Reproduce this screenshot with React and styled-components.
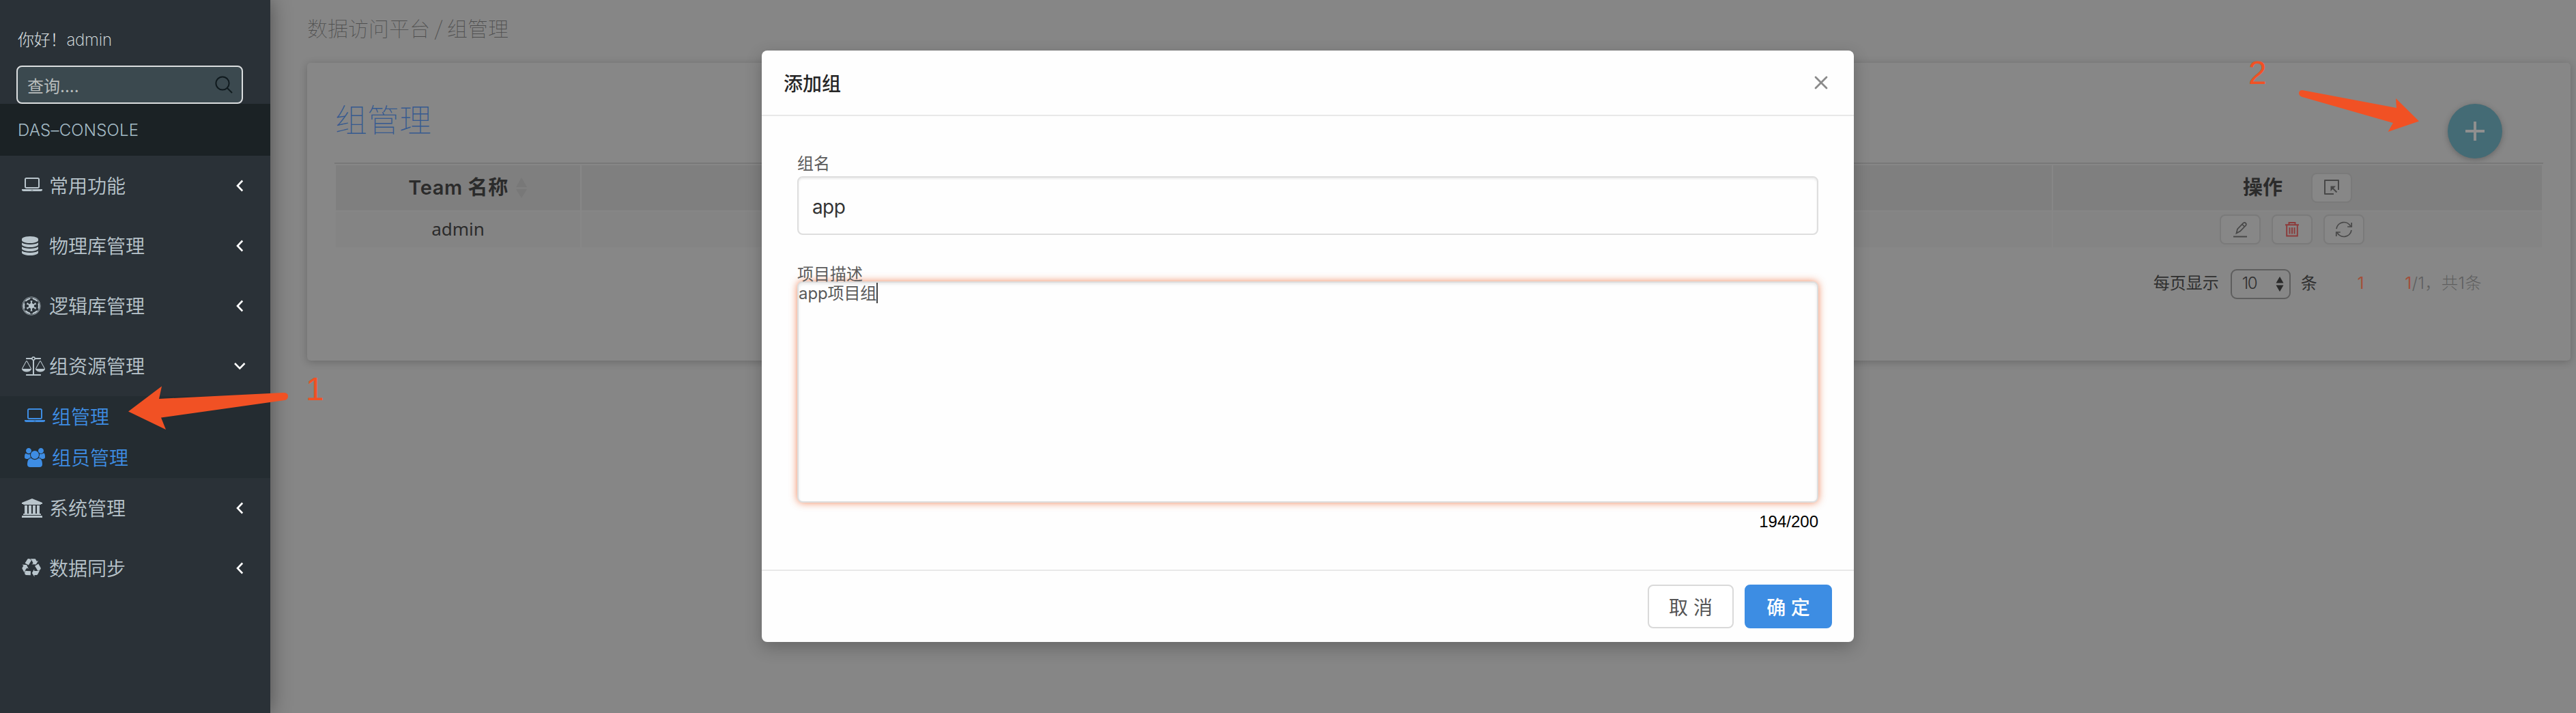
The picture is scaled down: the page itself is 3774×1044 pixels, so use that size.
import React from "react";
import styled, { createGlobalStyle } from "styled-components";
import { FaEmpire } from "react-icons/fa";

const FONT = `Inter, "Noto Sans CJK SC", sans-serif`;

const GlobalStyle = createGlobalStyle`
  *, *::before, *::after { box-sizing: border-box; }
  body { margin: 0; background: #868686; font-family: ${FONT}; overflow: hidden; }
  button, input, textarea { font-family: inherit; margin: 0; outline: none; }
`;

/* ---------- page frame ---------- */

const Page = styled.div`
  position: relative;
  display: flex;
  width: 3774px;
  height: 1044px;
  overflow: hidden;
  background: #868686;
`;

const Sidebar = styled.aside`
  position: relative;
  z-index: 1;
  flex: none;
  width: 396px;
  height: 100%;
  background: #2a3137;
  box-shadow: 0 0 28px rgba(0, 0, 0, 0.42);
`;

const Greeting = styled.div`
  height: 96px;
  padding: 44px 0 0 26px;
  color: #dfe3e5;
  font-size: 24px;
  font-weight: 250;
  line-height: 30px;
  letter-spacing: -0.2px;
`;

const SearchBox = styled.div`
  display: flex;
  align-items: center;
  justify-content: space-between;
  width: 332px;
  height: 56px;
  margin-left: 24px;
  padding: 0 13px 0 14px;
  border: 2px solid #dcdfe0;
  border-radius: 8px;
  background: #3b494f;
  color: #b9bdbd;
  font-size: 24px;
`;

const ConsoleBand = styled.div`
  display: flex;
  align-items: center;
  height: 76px;
  padding-left: 26px;
  background: #1b2225;
  color: #a5bcc7;
  font-size: 24px;
  font-weight: 300;
  letter-spacing: 0.2px;
`;

const MenuItem = styled.div`
  display: flex;
  align-items: center;
  height: 88px;
  padding: 0 40px 0 32px;
  color: #b9c5cc;
  font-size: 28px;
  font-weight: 350;
`;

const IconSlot = styled.span`
  display: flex;
  flex: none;
  width: 40px;
  svg { display: block; }
`;

const MenuLabel = styled.span`
  flex: 1;
  padding-top: 1px;
  line-height: 36px;
`;

const Submenu = styled.div`
  background: #242c31;
`;

const SubItem = styled(MenuItem)`
  height: 60px;
  padding-left: 36px;
  color: #3e8de3;
`;

/* ---------- main content ---------- */

const Main = styled.main`
  flex: 1;
  display: flex;
  flex-direction: column;
  padding: 20px 8px 0 54px;
`;

const Breadcrumb = styled.div`
  height: 72px;
  color: #4e4e4e;
  font-family: "Noto Sans CJK SC", sans-serif;
  font-size: 30px;
  font-weight: 100;
  line-height: 40px;
`;

const Card = styled.section`
  display: flex;
  flex-direction: column;
  height: 436px;
  padding: 60px 40px 0;
  border-radius: 5px;
  background: #878787;
  box-shadow: 0 2px 12px rgba(0, 0, 0, 0.22);
`;

const CardHead = styled.div`
  display: flex;
  justify-content: space-between;
  height: 86px;
  padding: 0 60px 0 1px;
`;

const CardTitle = styled.h1`
  margin: 0;
  color: #365a90;
  font-family: "Noto Sans CJK SC", sans-serif;
  font-size: 47px;
  font-weight: 100;
  line-height: 41px;
`;

const AddButton = styled.button`
  display: flex;
  align-items: center;
  justify-content: center;
  width: 80px;
  height: 80px;
  padding: 0;
  border: 0;
  border-radius: 50%;
  background: #446b75;
  box-shadow: 0 2px 8px rgba(0, 0, 0, 0.25);
`;

const Table = styled.div`
  border-top: 2px solid #787878;
  padding: 2px 2px 0;
`;

const TableRow = styled.div`
  display: grid;
  grid-template-columns: 358px 1438px 714px 716px;
  column-gap: 2px;
  height: ${(p) => (p.$head ? 66 : 52)}px;
  margin-bottom: 2px;
`;

const Cell = styled.div`
  display: flex;
  align-items: center;
  justify-content: center;
  padding-left: ${(p) => p.$left || 0}px;
  padding-right: ${(p) => p.$right || 0}px;
  padding-bottom: ${(p) => (p.$text ? 3 : 0)}px;
  background: ${(p) => (p.$head ? "#7f7f7f" : "#848484")};
  color: #2b2b2b;
  font-family: ${(p) => (p.$head ? FONT : `"Noto Sans", sans-serif`)};
  font-size: ${(p) => (p.$head ? 29 : 26)}px;
  font-weight: ${(p) => (p.$head ? 600 : 400)};
`;

const ColumnName = styled.span`
  margin-right: ${(p) => p.$gap}px;
  letter-spacing: ${(p) => p.$spacing || 0}px;
  line-height: 36px;
`;

const ActionButton = styled.button`
  display: flex;
  align-items: center;
  justify-content: center;
  width: 60px;
  height: 44px;
  padding: 0;
  border: 2px solid #7a7a7a;
  border-radius: 8px;
  background: #878787;
  color: ${(p) => p.$color || "#474747"};
`;

const ActionGroup = styled.div`
  display: flex;
  gap: 16px;
`;

const Pager = styled.div`
  display: flex;
  align-items: center;
  justify-content: flex-end;
  height: 44px;
  margin-top: 30px;
  padding-right: 90px;
  color: #2f2f2f;
  font-size: 24px;
  line-height: 28px;
`;

const PagerText = styled.span`
  padding-bottom: 2px;
`;

const PageSize = styled.div`
  display: flex;
  align-items: center;
  justify-content: space-between;
  width: 88px;
  height: 44px;
  margin: 0 15px 0 17px;
  padding: 0 8px 0 15px;
  border: 2px solid #5e5e5e;
  border-radius: 9px;
  font-weight: 300;
  letter-spacing: -1.5px;
`;

const PageNumber = styled(PagerText)`
  margin-left: 59px;
  color: #a2503a;
  font-weight: 400;
`;

const Total = styled(PagerText)`
  margin-left: 60px;
  color: #5f5f5f;
  font-weight: 300;
  letter-spacing: 0.5px;
  em { color: #a2503a; font-style: normal; font-weight: 400; }
`;

/* ---------- dialog ---------- */

const Dialog = styled.div`
  position: absolute;
  z-index: 2;
  top: 74px;
  left: 1116px;
  display: flex;
  flex-direction: column;
  width: 1600px;
  height: 866px;
  border-radius: 8px;
  background: #fefefe;
  box-shadow: 0 8px 24px rgba(0, 0, 0, 0.24);
`;

const DialogHeader = styled.div`
  display: flex;
  align-items: center;
  justify-content: space-between;
  height: 96px;
  padding: 0 38px 0 32px;
  border-bottom: 2px solid #e8e8e8;
  color: #262626;
  font-size: 28px;
  font-weight: 500;
`;

const DialogBody = styled.div`
  flex: 1;
  padding: 53px 52px 0;
`;

const FieldLabel = styled.label`
  display: block;
  height: ${(p) => p.$height}px;
  color: #5c5c5c;
  font-size: 24px;
  line-height: 34px;
`;

const TextInput = styled.input`
  display: block;
  width: 100%;
  height: 86px;
  margin-bottom: 41px;
  padding: 4px 20px 0;
  border: 2px solid #dedede;
  border-radius: 8px;
  background: #fefefe;
  box-shadow: inset 0 2px 3px rgba(0, 0, 0, 0.08);
  color: #333;
  font-size: 28px;
  letter-spacing: -0.6px;
`;

const TextArea = styled.div`
  display: flex;
  align-items: flex-start;
  height: 324px;
  border: 2px solid #dedede;
  border-radius: 8px;
  background: #fefefe;
  box-shadow: inset 0 2px 4px rgba(0, 0, 0, 0.09), 0 0 12px rgba(236, 90, 32, 0.72);
  color: #595959;
  font-size: 24px;
  line-height: 32px;
  letter-spacing: -0.1px;
`;

const Caret = styled.i`
  width: 2px;
  height: 30px;
  background: #444;
`;

const Counter = styled.div`
  margin-top: 14px;
  color: #000;
  font-family: "Liberation Sans", sans-serif;
  font-size: 24px;
  line-height: 28px;
  text-align: right;
`;

const DialogFooter = styled.div`
  display: flex;
  align-items: center;
  justify-content: flex-end;
  gap: 16px;
  height: 106px;
  padding: 0 32px;
  border-top: 2px solid #e8e8e8;
`;

const DialogButton = styled.button`
  display: flex;
  align-items: center;
  justify-content: center;
  width: ${(p) => (p.$primary ? 128 : 126)}px;
  height: 64px;
  padding: 0;
  border: 2px solid ${(p) => (p.$primary ? "#3d8de3" : "#d9d9d9")};
  border-radius: 8px;
  background: ${(p) => (p.$primary ? "#3d8de3" : "#fff")};
  color: ${(p) => (p.$primary ? "#fff" : "#555")};
  font-size: 28px;
  font-weight: ${(p) => (p.$primary ? 500 : 400)};
  white-space: pre;
`;

/* ---------- annotations over the page ---------- */

const Marks = styled.svg`
  position: absolute;
  z-index: 3;
  top: 0;
  left: 0;
  pointer-events: none;
`;

const MarkNumber = styled.span`
  position: absolute;
  z-index: 3;
  top: ${(p) => p.$top}px;
  left: ${(p) => p.$left}px;
  color: #f15124;
  font-family: "Liberation Sans", sans-serif;
  font-size: 48px;
  line-height: 56px;
`;

/* ---------- icons ---------- */

const glyphs = {
  laptop: [1920, "M416 1152q-66 0-113-47t-47-113v-704q0-66 47-113t113-47h1088q66 0 113 47t47 113v704q0 66-47 113t-113 47h-1088zm-32-864v704q0 13 9.5 22.5t22.5 9.5h1088q13 0 22.5-9.5t9.5-22.5v-704q0-13-9.5-22.5t-22.5-9.5h-1088q-13 0-22.5 9.5t-9.5 22.5zm1376 928h160v96q0 40-47 68t-113 28h-1600q-66 0-113-28t-47-68v-96h1760zm-720 96q16 0 16-16t-16-16h-160q-16 0-16 16t16 16h160z"],
  database: [1536, "M768 768q237 0 443-43t325-127v170q0 69-103 128t-280 93.5-385 34.5-385-34.5-280-93.5-103-128v-170q119 84 325 127t443 43zm0 768q237 0 443-43t325-127v170q0 69-103 128t-280 93.5-385 34.5-385-34.5-280-93.5-103-128v-170q119 84 325 127t443 43zm0-384q237 0 443-43t325-127v170q0 69-103 128t-280 93.5-385 34.5-385-34.5-280-93.5-103-128v-170q119 84 325 127t443 43zm0-1152q208 0 385 34.5t280 93.5 103 128v128q0 69-103 128t-280 93.5-385 34.5-385-34.5-280-93.5-103-128v-128q0-69 103-128t280-93.5 385-34.5z"],
  scale: [2176, "M1728 448l-384 704h768zm-1280 0l-384 704h768zm821-192q-14 40-45.5 71.5t-71.5 45.5v1291h608q14 0 23 9t9 23v64q0 14-9 23t-23 9h-1344q-14 0-23-9t-9-23v-64q0-14 9-23t23-9h608v-1291q-40-14-71.5-45.5t-45.5-71.5h-491q-14 0-23-9t-9-23v-64q0-14 9-23t23-9h491q21-57 70-92.5t111-35.5 111 35.5 70 92.5h491q14 0 23 9t9 23v64q0 14-9 23t-23 9h-491zm-181 16q33 0 56.5-23.5t23.5-56.5-23.5-56.5-56.5-23.5-56.5 23.5-23.5 56.5 23.5 56.5 56.5 23.5zm1088 880q0 73-46.5 131t-117.5 91-144.5 49.5-139.5 16.5-139.5-16.5-144.5-49.5-117.5-91-46.5-131q0-11 35-81t92-174.5 107-195.5 102-184 56-100q18-33 56-33t56 33q4 7 56 100t102 184 107 195.5 92 174.5 35 81zm-1280 0q0 73-46.5 131t-117.5 91-144.5 49.5-139.5 16.5-139.5-16.5-144.5-49.5-117.5-91-46.5-131q0-11 35-81t92-174.5 107-195.5 102-184 56-100q18-33 56-33t56 33q4 7 56 100t102 184 107 195.5 92 174.5 35 81z"],
  users: [1920, "M593 896q-162 5-265 128h-134q-82 0-138-40.5t-56-118.5q0-353 124-353 6 0 43.5 21t97.5 42.5 119 21.5q67 0 133-23-5 37-5 66 0 159 81 291zm1071 637q0 120-73 189.5t-194 69.5h-874q-121 0-194-69.5t-73-189.5q0-53 3.5-103.5t14-109 26.5-108.5 43-97.5 62-81 85.5-53.5 111.5-20q10 0 43 21.5t73 48 107 48 135 21.5 135-21.5 107-48 73-48 43-21.5q61 0 111.5 20t85.5 53.5 62 81 43 97.5 26.5 108.5 14 109 3.5 103.5zm-1024-1277q0 106-75 181t-181 75-181-75-75-181 75-181 181-75 181 75 75 181zm704 384q0 159-112.5 271.5t-271.5 112.5-271.5-112.5-112.5-271.5 112.5-271.5 271.5-112.5 271.5 112.5 112.5 271.5zm576 225q0 78-56 118.5t-138 40.5h-134q-103-123-265-128 81-132 81-291 0-29-5-66 66 23 133 23 59 0 119-21.5t97.5-42.5 43.5-21q124 0 124 353zm-128-609q0 106-75 181t-181 75-181-75-75-181 75-181 181-75 181 75 75 181z"],
  bank: [1920, "M960 0l960 384v128h-128q0 26-20.5 45t-48.5 19h-1526q-28 0-48.5-19t-20.5-45h-128v-128zm-704 640h256v768h128v-768h256v768h128v-768h256v768h128v-768h256v768h59q28 0 48.5 19t20.5 45v64h-1664v-64q0-26 20.5-45t48.5-19h59v-768zm1595 960q28 0 48.5 19t20.5 45v128h-1920v-128q0-26 20.5-45t48.5-19h1782z"],
  recycle: [1792, "M836 1169l-15 368-2 22-420-29q-36-3-67-31.5t-47-65.5q-11-27-14.500-55t4-65 12-55 21.500-64 19-53q78 12 509 28zm-387-586l180 379-147-92q-63 72-111.500 144.500t-72.500 125-39.500 94.500-18.500 63l-4 21-190-357q-17-26-18-56t6-47l8-18q35-63 114-188l-140-86zm1231 517l-188 359q-12 29-36.500 46.500t-43.500 20.500l-18 4q-71 7-219 12l8 164-230-367 211-362 7 173q170 16 283 5t170-33zm-785-924q-47 63-265 435l-317-187-19-12 225-356q20-31 60-45t80-10q24 2 48.500 12t42 21 41.500 33 36 34.500 36 39.500 32 35zm655 307l212 363q18 37 12.500 76t-27.500 74q-13 20-33 37t-38 28-48.500 22-47 16-51.500 14-46 12q-34-72-265-436l313-195zm-143-226l142-83-220 373-419-20 151-86q-34-89-75-166t-75.500-123.500-64.500-80-47-46.500l-17-13 405 1q31-3 58 10.500t39 28.500l11 15q39 61 112 190z"],
};

const Glyph = ({ name }) => {
  const [width, d] = glyphs[name];
  return (
    <svg width={(width * 28) / 1792} height="28" viewBox={`0 0 ${width} 1792`} fill="currentColor">
      <path d={d} />
    </svg>
  );
};

const ChevronMark = styled.svg`
  overflow: visible;
`;

const Chevron = ({ open }) => (
  <ChevronMark width="16" height="18" viewBox="0 0 16 18" fill="none" stroke="#fff" strokeWidth="2.6">
    <path d={open ? "M4 5l7.3 7.3L18.5 5" : "M15.2 1.5L8 9l7.2 7.5"} />
  </ChevronMark>
);

const SearchIcon = () => (
  <svg width="26" height="26" viewBox="0 0 26 26" fill="none" stroke="#101a1e" strokeWidth="2">
    <circle cx="11" cy="11" r="9.6" />
    <path d="M18 18l7 7" />
  </svg>
);

const SortIcon = () => (
  <svg width="16" height="30" viewBox="0 0 16 30" fill="#787878">
    <path d="M8 0l8 14H0zM8 30l8-13H0z" />
  </svg>
);

const SelectIcon = () => (
  <svg width="22" height="24" viewBox="0 0 22 24" fill="none" stroke="#474747" strokeWidth="2">
    <path d="M14 21H1V1h20v14" strokeLinejoin="round" />
    <path d="M11.500 11.500l7 7" />
    <path d="M9.500 9.500h7.500l-7.500 7.500z" fill="#474747" stroke="none" />
  </svg>
);

const EditIcon = () => (
  <svg width="22" height="24" viewBox="0 0 22 24" fill="none" stroke="currentColor" strokeWidth="1.7">
    <path d="M5.500 17.500l1.500-6L15.500 2.600q2-1.400 3.500 0t.3 3.400L11 14.500zM14 4.500l3.500 3.500" />
    <path d="M1 22.500h20" strokeWidth="1.9" />
  </svg>
);

const TrashIcon = () => (
  <svg width="20" height="24" viewBox="0 0 20 24" fill="none" stroke="currentColor" strokeWidth="1.9">
    <path d="M0 5.300h20M5.500 5V2h9v3M2.200 5.500V21.500h15.600V5.500M6.500 9v9.500M10 9v9.500M13.500 9v9.500" />
  </svg>
);

const RefreshIcon = () => (
  <svg width="26" height="26" viewBox="0 0 26 26" fill="none" stroke="currentColor" strokeWidth="1.7">
    <path d="M2 12A11.200 11.200 0 0 1 23 8.500M24 14A11.200 11.200 0 0 1 3 17.500" />
    <path d="M24.200 3v6h-6M1.800 23v-6h6" />
  </svg>
);

const Stepper = () => (
  <svg width="12" height="24" viewBox="0 0 12 24" fill="#2b2b2b">
    <path d="M6 1l5.500 9.500H.5zM6 23l5.500-9.500H.5z" />
  </svg>
);

const menu = [
  { label: "常用功能", icon: <Glyph name="laptop" /> },
  { label: "物理库管理", icon: <Glyph name="database" /> },
  { label: "逻辑库管理", icon: <FaEmpire size={28} /> },
  {
    label: "组资源管理",
    icon: <Glyph name="scale" />,
    items: [
      { label: "组管理", icon: <Glyph name="laptop" /> },
      { label: "组员管理", icon: <Glyph name="users" /> },
    ],
  },
  { label: "系统管理", icon: <Glyph name="bank" /> },
  { label: "数据同步", icon: <Glyph name="recycle" /> },
];

export default function App() {
  return (
    <Page>
      <GlobalStyle />
      <Sidebar>
        <Greeting>你好！admin</Greeting>
        <SearchBox>
          <span>查询....</span>
          <SearchIcon />
        </SearchBox>
        <ConsoleBand>DAS–CONSOLE</ConsoleBand>
        {menu.map((entry) => (
          <React.Fragment key={entry.label}>
            <MenuItem>
              <IconSlot>{entry.icon}</IconSlot>
              <MenuLabel>{entry.label}</MenuLabel>
              <Chevron open={Boolean(entry.items)} />
            </MenuItem>
            {entry.items && (
              <Submenu>
                {entry.items.map((item) => (
                  <SubItem key={item.label}>
                    <IconSlot>{item.icon}</IconSlot>
                    <MenuLabel>{item.label}</MenuLabel>
                  </SubItem>
                ))}
              </Submenu>
            )}
          </React.Fragment>
        ))}
      </Sidebar>

      <Main>
        <Breadcrumb>数据访问平台 / 组管理</Breadcrumb>
        <Card>
          <CardHead>
            <CardTitle>组管理</CardTitle>
            <AddButton>
              <svg width="28" height="28" viewBox="0 0 28 28" stroke="#8f8f8f" strokeWidth="4">
                <path d="M14 0v28M0 14h28" />
              </svg>
            </AddButton>
          </CardHead>
          <Table>
            <TableRow $head>
              <Cell $head $left={28}>
                <ColumnName $gap={11} $spacing={0.6}>Team 名称</ColumnName>
                <SortIcon />
              </Cell>
              <Cell $head />
              <Cell $head $left={66}>
                <SortIcon />
              </Cell>
              <Cell $head>
                <ColumnName $gap={42}>操作</ColumnName>
                <ActionButton>
                  <SelectIcon />
                </ActionButton>
              </Cell>
            </TableRow>
            <TableRow>
              <Cell $text>admin</Cell>
              <Cell />
              <Cell />
              <Cell $right={16}>
                <ActionGroup>
                  <ActionButton><EditIcon /></ActionButton>
                  <ActionButton $color="#8c3a3a"><TrashIcon /></ActionButton>
                  <ActionButton><RefreshIcon /></ActionButton>
                </ActionGroup>
              </Cell>
            </TableRow>
          </Table>
          <Pager>
            <PagerText>每页显示</PagerText>
            <PageSize>
              <PagerText>10</PagerText>
              <Stepper />
            </PageSize>
            <PagerText>条</PagerText>
            <PageNumber>1</PageNumber>
            <Total><em>1</em>/1，共1条</Total>
          </Pager>
        </Card>
      </Main>

      <Dialog>
        <DialogHeader>
          <span>添加组</span>
          <svg width="20" height="20" viewBox="0 0 20 20" stroke="#8a8a8a" strokeWidth="2.8" strokeLinecap="round">
            <path d="M2 2l16 16M18 2L2 18" />
          </svg>
        </DialogHeader>
        <DialogBody>
          <FieldLabel $height={35}>组名</FieldLabel>
          <TextInput defaultValue="app" />
          <FieldLabel $height={27}>项目描述</FieldLabel>
          <TextArea>
            <span>app项目组</span>
            <Caret />
          </TextArea>
          <Counter>194/200</Counter>
        </DialogBody>
        <DialogFooter>
          <DialogButton>取 消</DialogButton>
          <DialogButton $primary>确 定</DialogButton>
        </DialogFooter>
      </Dialog>

      <Marks width="3774" height="1044" viewBox="0 0 3774 1044" fill="#f15124">
        <path d="M188 602.500L237 565.500L233 584L415 575Q422 575 422 580Q422 585 417 586L236 611.500L243 629Z" />
        <path d="M3544 177.500L3510 144L3511 158L3373 132Q3368 132 3368 137Q3369 141 3373 142L3506 180L3498.500 193Z" />
      </Marks>
      <MarkNumber $top={542} $left={448}>1</MarkNumber>
      <MarkNumber $top={79} $left={3294}>2</MarkNumber>
    </Page>
  );
}
